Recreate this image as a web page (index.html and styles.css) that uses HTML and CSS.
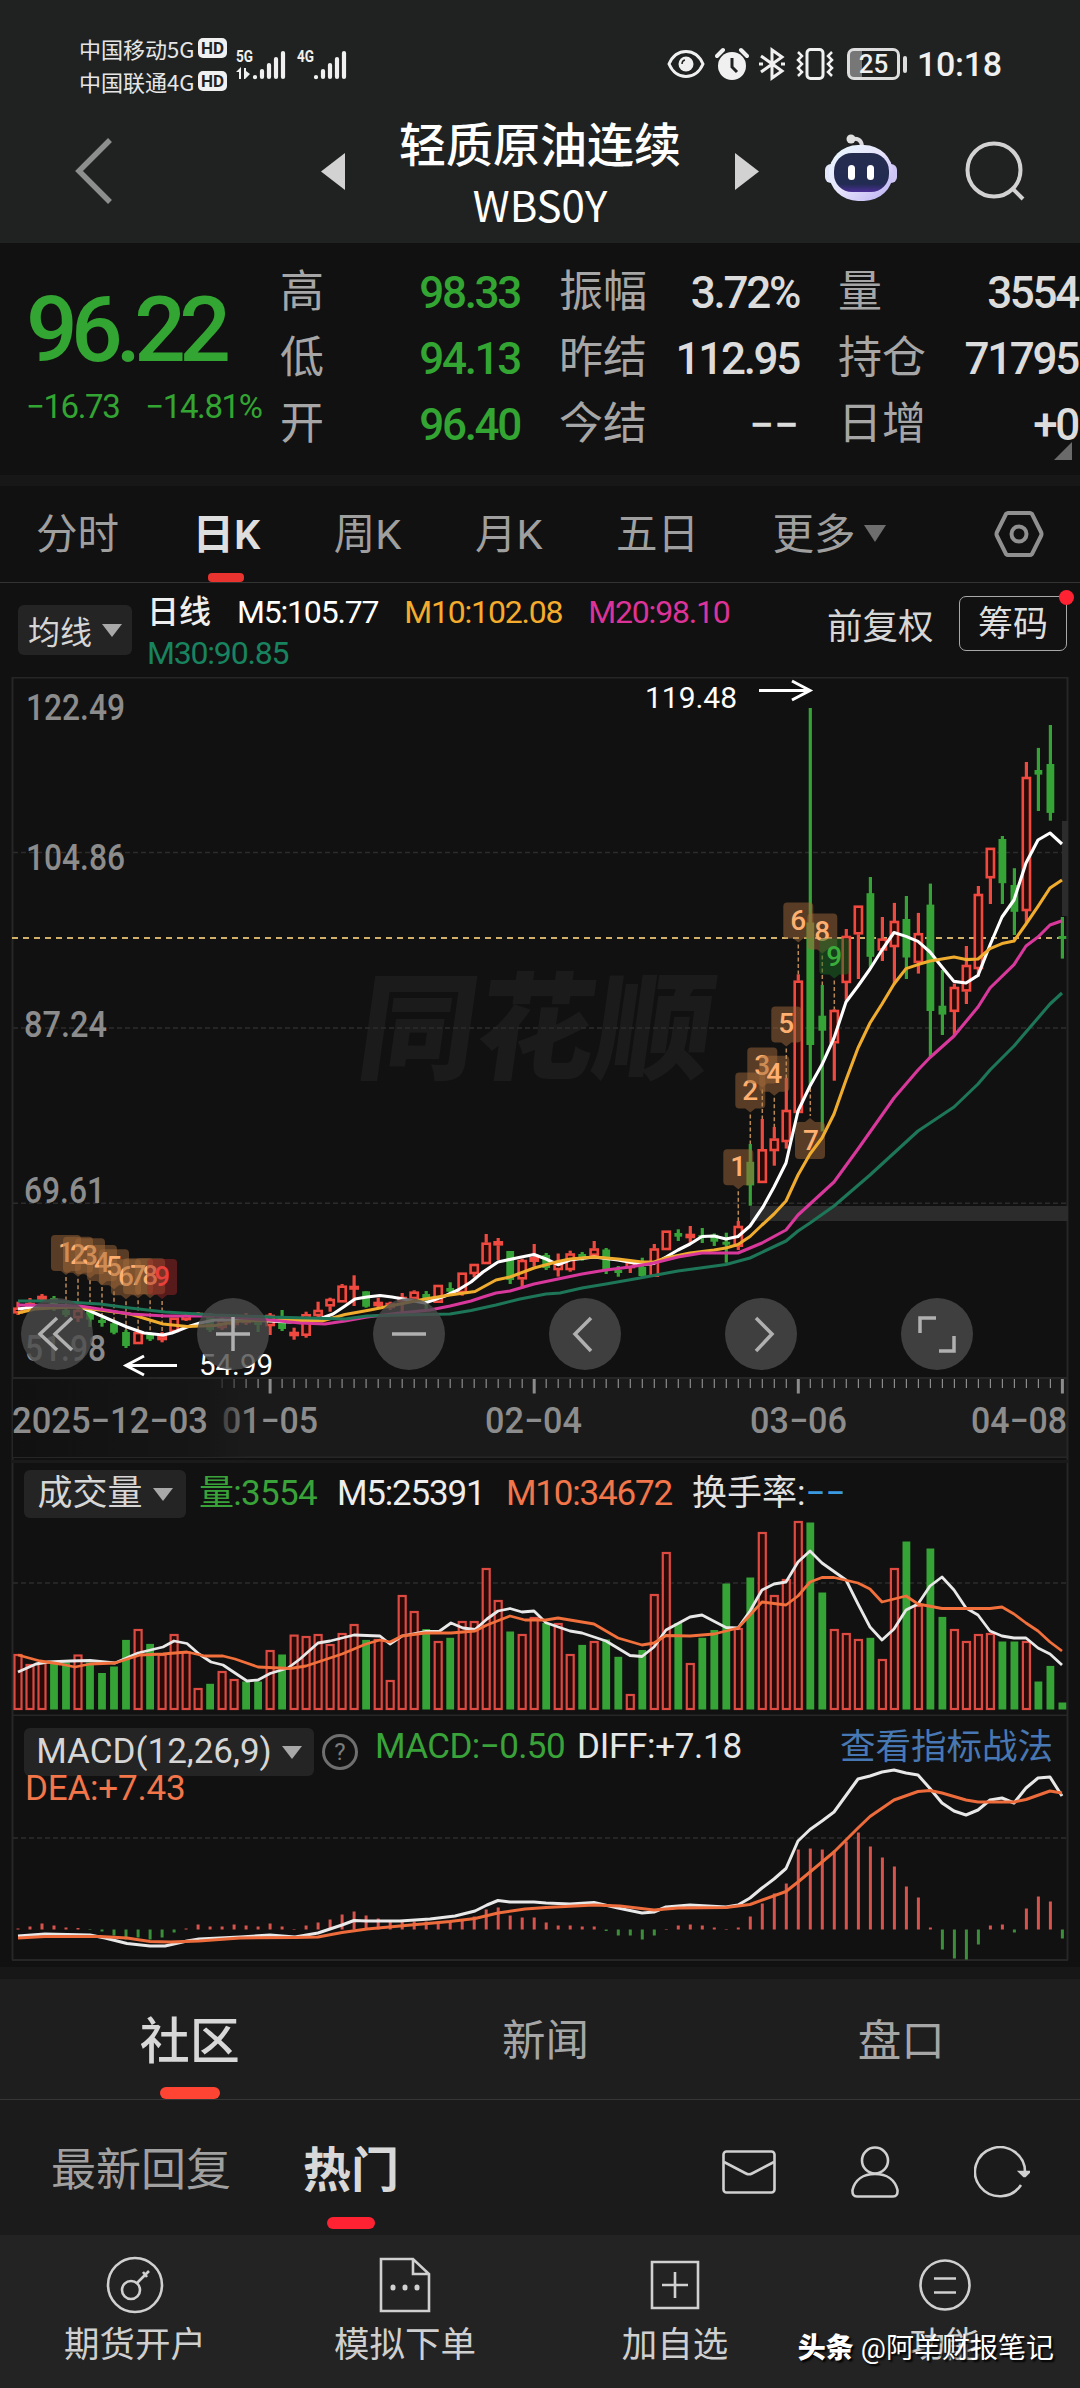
FILE: index.html
```html
<!DOCTYPE html>
<html lang="zh-CN">
<head>
  <meta charset="UTF-8">
  <meta name="viewport" content="width=device-width, initial-scale=1.0">
  <title>轻质原油连续 WBS0Y</title>
  <link rel="stylesheet" href="styles.css">
</head>
<body>
  <div class="top">
    <div class="status">
      <div class="carriers">
        <div class="carrier"><span>中国移动5G</span><b>HD</b></div>
        <div class="carrier"><span>中国联通4G</span><b>HD</b></div>
      </div>
      <svg class="signals" width="114" height="38" viewBox="0 -4 114 38">
        <g fill="#f0f0f0">
          <text x="0" y="14" class="net" textLength="17" lengthAdjust="spacingAndGlyphs">5G</text>
          <text x="61" y="14" class="net" textLength="17" lengthAdjust="spacingAndGlyphs">4G</text>
          <path d="M0 24L5 19V31H3V24ZM8 20H10V23L14 26L9 31H8Z"/>
        </g>
        <path d="M18 29V29.2M25 23V29M32 17V29M39 11V29M46 5V29M79 29V29.2M86 23V29M93 17V29M100 11V29M107 5V29" transform="translate(1 0)" stroke="#f0f0f0" stroke-width="4.2" stroke-linecap="round"/>
      </svg>
      <div class="status-right">
        <svg width="38" height="30" viewBox="0 0 38 30" fill="none" stroke="#f0f0f0" stroke-width="3"><path d="M2 15C6 6 12 2.500 19 2.500S32 6 36 15C32 24 26 27.500 19 27.500S6 24 2 15Z"/><circle cx="19" cy="15" r="7.500" fill="#f0f0f0" stroke="none"/><path d="M15 15Q15 11.500 18 11" stroke="#1f2221" stroke-width="1.500"/></svg>
        <svg class="alarm" width="34" height="34" viewBox="0 0 34 34"><circle cx="17" cy="19" r="14" fill="#f0f0f0"/><path d="M2 9L8 3M32 9L26 3" stroke="#f0f0f0" stroke-width="4" stroke-linecap="round"/><path d="M17 11V20L22 25" fill="none" stroke="#1f2221" stroke-width="3"/></svg>
        <svg class="bt" width="26" height="34" viewBox="0 0 26 34" fill="none" stroke="#f0f0f0" stroke-width="3"><path d="M2 9L23 24L13 31V3L23 10L2 25M0 17H4M22 17H26"/></svg>
        <svg class="vib" width="40" height="34" viewBox="0 0 40 34" fill="none" stroke="#f0f0f0" stroke-width="3"><rect x="12" y="2.500" width="16" height="29" rx="3.500"/><path d="M3 5L7 9L3 13L7 17L3 21L7 25L3 29M37 5L33 9L37 13L33 17L37 21L33 25L37 29" stroke-width="2.500"/></svg>
        <div class="battery"><span>25</span></div>
        <i class="battery-cap"></i>
        <span class="time">10:18</span>
      </div>
    </div>
    <div class="header">
      <svg class="back" width="40" height="66" viewBox="0 0 40 66"><path d="M36 2L5 33L36 64" fill="none" stroke="#8d8f8e" stroke-width="5.500"/></svg>
      <svg class="prev" width="24" height="37" viewBox="0 0 24 37"><path d="M24 0V37L0 18.500Z" fill="#d2d2d2"/></svg>
      <div class="title">
        <h1>轻质原油连续</h1>
        <p>WBS0Y</p>
      </div>
      <svg class="next" width="24" height="37" viewBox="0 0 24 37"><path d="M0 0V37L24 18.500Z" fill="#d2d2d2"/></svg>
      <svg class="robot" width="74" height="68" viewBox="0 0 74 68">
        <defs>
          <linearGradient id="head" x1="0" y1="0" x2="1" y2="1"><stop offset="0" stop-color="#e9fbff"/><stop offset=".5" stop-color="#e6e2fb"/><stop offset="1" stop-color="#b9aef2"/></linearGradient>
          <linearGradient id="face" x1="0" y1="0" x2="0" y2="1"><stop offset="0" stop-color="#252d4f"/><stop offset=".8" stop-color="#222b52"/><stop offset="1" stop-color="#4b2f96"/></linearGradient>
        </defs>
        <path d="M27 5Q37 3 38 12" fill="none" stroke="#dcdce0" stroke-width="4"/>
        <circle cx="27" cy="5" r="4.500" fill="#e0e0e0"/>
        <rect x="1" y="30" width="12" height="19" rx="6" fill="#e2e6fb"/>
        <rect x="61" y="30" width="12" height="19" rx="6" fill="#cfc6f6"/>
        <rect x="5" y="11" width="64" height="56" rx="29" fill="url(#head)"/>
        <rect x="10" y="19" width="55" height="39" rx="18" fill="url(#face)"/>
        <rect x="24" y="31" width="7" height="15" rx="3.500" fill="#fff"/>
        <rect x="43" y="31" width="7" height="15" rx="3.500" fill="#fff"/>
      </svg>
      <svg class="search" width="62" height="62" viewBox="0 0 62 62" fill="none" stroke="#d2d2d2" stroke-width="4"><circle cx="29" cy="29" r="26.500"/><path d="M47 47L58 58"/></svg>
    </div>
  </div>

  <div class="quote">
    <div class="last">
      <div class="price">96.22</div>
      <div class="change"><span>−16.73</span><span>−14.81%</span></div>
    </div>
    <dl class="stats down">
      <dt>高</dt><dd>98.33</dd>
      <dt>低</dt><dd>94.13</dd>
      <dt>开</dt><dd>96.40</dd>
    </dl>
    <dl class="stats">
      <dt>振幅</dt><dd>3.72%</dd>
      <dt>昨结</dt><dd>112.95</dd>
      <dt>今结</dt><dd class="dash">−−</dd>
    </dl>
    <dl class="stats">
      <dt>量</dt><dd>3554</dd>
      <dt>持仓</dt><dd>71795</dd>
      <dt>日增</dt><dd>+0</dd>
    </dl>
    <i class="corner"></i>
  </div>

  <div class="tabs">
    <span>分时</span>
    <span class="on">日K</span>
    <span>周K</span>
    <span>月K</span>
    <span>五日</span>
    <span>更多<i class="tri"></i></span>
    <svg width="50" height="48" viewBox="0 0 50 48" fill="none" stroke="#909090" stroke-width="4"><path d="M14 3H36Q37 3 38 4L47 22Q48 24 47 26L38 44Q37 45 36 45H14Q13 45 12 44L3 26Q2 24 3 22L12 4Q13 3 14 3Z"/><circle cx="25" cy="24" r="7.500"/></svg>
  </div>

  <div class="ma">
    <span class="pick">均线<i class="tri"></i></span>
    <div class="ma-values">
      <span class="c-name">日线</span>
      <span class="c5">M5:105.77</span>
      <span class="c10">M10:102.08</span>
      <span class="c20">M20:98.10</span>
      <span class="c30">M30:90.85</span>
    </div>
    <span class="adjust">前复权</span>
    <span class="chips">筹码<i class="dot"></i></span>
  </div>

  <div class="panel kline">
    <svg id="kline" width="1080" height="781" viewBox="0 677 1080 781"></svg>
    <div class="tools">
      <span><svg width="72" height="72"><path d="M36 20L19 36L36 52M51 20L34 36L51 52"/></svg></span>
      <span><svg width="72" height="72"><path d="M19 36H53M36 19V53"/></svg></span>
      <span><svg width="72" height="72"><path d="M19 36H53"/></svg></span>
      <span><svg width="72" height="72"><path d="M42 20L26 36L42 53"/></svg></span>
      <span><svg width="72" height="72"><path d="M31 20L47 36L31 53"/></svg></span>
      <span><svg width="72" height="72"><path d="M19 35V20H35M38 53H53V38"/></svg></span>
    </div>
  </div>

  <div class="panel volume">
    <svg id="volume" width="1080" height="258" viewBox="0 1458 1080 258"></svg>
    <div class="legend">
      <span class="pick">成交量<i class="tri"></i></span>
      <span class="v1">量:3554</span>
      <span class="v2">M5:25391</span>
      <span class="v3">M10:34672</span>
      <span class="v4">换手率:<em>−−</em></span>
    </div>
  </div>

  <div class="panel macd">
    <svg id="macd" width="1080" height="251" viewBox="0 1716 1080 251"></svg>
    <div class="legend">
      <span class="pick">MACD(12,26,9)<i class="tri"></i></span>
      <span class="help">?</span>
      <span class="m1">MACD:−0.50</span>
      <span class="m2">DIFF:+7.18</span>
      <span class="link">查看指标战法</span>
      <span class="m3">DEA:+7.43</span>
    </div>
  </div>

  <div class="main-tabs">
    <span class="on">社区</span>
    <span>新闻</span>
    <span>盘口</span>
  </div>

  <div class="sub-tabs">
    <span>最新回复</span>
    <span class="on">热门</span>
    <svg class="mail" width="54" height="44" viewBox="0 0 54 44"><rect x="1.500" y="1.500" width="51" height="41" rx="3"/><path d="M2 12L24 23.500Q27 25 30 23.500L52 12"/></svg>
    <svg class="user" width="48" height="52" viewBox="0 0 48 52"><circle cx="24" cy="14.500" r="13"/><path d="M24 28C12 28 4 34 1.500 44Q1 50.500 6 50.500H42Q47 50.500 46.500 44C44 34 36 28 24 28Z"/></svg>
    <svg class="reload" width="56" height="52" viewBox="0 0 56 52"><path d="M51 26A25 24.500 0 1 0 47 39"/><path d="M46 26H55L51 30H50Z" fill="#d0d0d0"/></svg>
  </div>

  <div class="bottom">
    <div class="item">
      <svg width="60" height="60" viewBox="0 0 60 60"><circle cx="30" cy="30" r="27"/><circle cx="26" cy="35" r="9"/><path d="M32 28L44 16M38 17L42 22"/></svg>
      <span>期货开户</span>
    </div>
    <div class="item">
      <svg width="60" height="60" viewBox="0 0 60 60"><path d="M6 4H38L54 19V56H6ZM38 4V19H54"/><path d="M18 32V33M30 32V33M42 32V33" stroke-width="5" stroke-linecap="round"/></svg>
      <span>模拟下单</span>
    </div>
    <div class="item">
      <svg width="60" height="60" viewBox="0 0 60 60"><path d="M7 7H53V53H7ZM17 30H43M30 17V43"/></svg>
      <span>加自选</span>
    </div>
    <div class="item">
      <svg width="60" height="60" viewBox="0 0 60 60"><circle cx="30" cy="30" r="24.500"/><path d="M19 23.500H41M19 37.500H41"/></svg>
      <span>功能</span>
    </div>
    <div class="sign"><b>头条</b><span>@阿羊财报笔记</span></div>
  </div>

  <script src="chart.js"></script>
</body>
</html>
```
FILE: styles.css
```css
*{
  margin: 0;
  padding: 0;
  box-sizing: border-box;
}
body{
  width: 1080px;
  height: 2388px;
  overflow: hidden;
  background: #111;
  color: #d6d6d6;
  font-family: Roboto, "Noto Sans CJK SC", sans-serif;
}
svg{
  display: block;
  flex: none;
}
i, em{
  font-style: normal;
}
.tri{
  display: inline-block;
  border: 10px solid transparent;
  border-top: 13px solid #a8a8a8;
  border-bottom: 0;
}

/* 顶部 */
.top{
  height: 243px;
  background: #1f2221;
}
.status{
  display: flex;
  height: 113px;
  padding: 31px 0 0 79px;
}
.carriers{
  width: 157px;
}
.carrier{
  display: flex;
  align-items: center;
  height: 33px;
  font: 22px "Noto Sans CJK SC", sans-serif;
  color: #e6e6e6;
}
.carrier span{
  width: 119px;
  white-space: nowrap;
}
.carrier b{
  width: 29px;
  height: 20px;
  border-radius: 5px;
  background: #f0f0f0;
  color: #1f2221;
  font: bold 17px/20px Roboto, sans-serif;
  text-align: center;
}
.signals{
  margin-top: 13px;
}
.net{
  font: bold 17px Roboto, sans-serif;
}
.status-right{
  display: flex;
  align-items: center;
  height: 34px;
  margin: 16px 0 0 317px;
}
.alarm{
  margin-left: 10px;
}
.bt{
  margin-left: 10px;
}
.vib{
  margin-left: 10px;
}
.battery{
  width: 53px;
  height: 32px;
  margin-left: 12px;
  border: 3px solid #ddd;
  border-radius: 7px;
  background: linear-gradient(90deg, #777 12px, transparent 12px);
  color: #f0f0f0;
  font: 500 26px/27px Roboto, sans-serif;
  text-align: center;
}
.battery-cap{
  width: 4px;
  height: 17px;
  margin-left: 3px;
  border-radius: 2px;
  background: #ddd;
}
.time{
  margin-left: 10px;
  font-size: 34px;
  font-weight: 500;
  letter-spacing: -0.3px;
  color: #f0f0f0;
}
.header{
  display: flex;
  align-items: flex-start;
  height: 130px;
  padding-left: 74px;
}
.back{
  margin-top: 25px;
}
.prev{
  margin: 40px 0 0 207px;
}
.title{
  width: 390px;
  margin-top: -3px;
  text-align: center;
  color: #fff;
  font-family: "Noto Sans CJK SC", sans-serif;
}
.title h1{
  font-size: 47px;
  line-height: 64px;
  font-weight: 500;
}
.title p{
  margin-top: 2px;
  font-size: 42px;
  line-height: 56px;
}
.next{
  margin-top: 40px;
}
.robot{
  margin: 21px 0 0 65px;
}
.search{
  margin: 28px 0 0 67px;
}

/* 报价 */
.quote{
  position: relative;
  display: flex;
  height: 243px;
  padding: 16px 0 0 26px;
  border-bottom: 11px solid #171717;
}
.last{
  flex: none;
  width: 254px;
  color: #33a532;
}
.price{
  margin-top: 21px;
  font-size: 91px;
  line-height: 100px;
  font-weight: 500;
  letter-spacing: -6.8px;
}
.change{
  display: flex;
  gap: 26px;
  margin-top: 7px;
  font-size: 33px;
  line-height: 40px;
  letter-spacing: -1.4px;
  white-space: nowrap;
}
.stats{
  display: grid;
  flex: none;
  grid-template-columns: 90px 150px;
  grid-auto-rows: 66px;
  margin-right: 39px;
  line-height: 66px;
}
.stats dt{
  font-size: 44px;
  color: #a6a6a6;
  white-space: nowrap;
}
.stats dd{
  padding-top: 1px;
  font-size: 44px;
  font-weight: 500;
  letter-spacing: -2.3px;
  text-align: right;
  color: #dcdcdc;
}
.stats.down dd{
  color: #33a532;
}
.stats .dash{
  letter-spacing: 0;
}
.corner{
  position: absolute;
  right: 8px;
  top: 199px;
  border: 9px solid #6a6a6a;
  border-left-color: transparent;
  border-top-color: transparent;
}

/* 周期 */
.tabs{
  display: flex;
  align-items: center;
  height: 97px;
  padding-left: 36px;
  border-bottom: 1px solid #333;
  font-size: 41.5px;
  color: #9f9f9f;
}
.tabs span{
  position: relative;
  height: 96px;
  margin-right: 73.5px;
  line-height: 98px;
  white-space: nowrap;
}
.tabs span:nth-child(6){
  margin-right: 108px;
}
.tabs .on{
  color: #dedede;
  font-weight: 600;
}
.tabs .on::after{
  content: "";
  position: absolute;
  left: 15px;
  bottom: 0;
  width: 36px;
  height: 9px;
  border-radius: 4px;
  background: #e8332f;
}
.tabs .tri{
  margin: 0 0 7px 9px;
  border-width: 17px 11px 0;
  border-top-color: #6e6e6e;
}

/* 均线 */
.ma{
  display: flex;
  height: 94px;
  padding-left: 18px;
}
.pick{
  display: flex;
  align-items: center;
  justify-content: center;
  gap: 10px;
  border-radius: 6px;
  background: #242424;
  color: #d6d6d6;
  white-space: nowrap;
}
.ma .pick{
  width: 114px;
  height: 50px;
  margin-top: 22px;
  font-size: 32px;
}
.ma-values{
  display: flex;
  flex: none;
  flex-wrap: wrap;
  column-gap: 26px;
  width: 675px;
  padding: 9px 0 0 15px;
  font-size: 32px;
  line-height: 41px;
  letter-spacing: -1.2px;
  align-content: flex-start;
}
.c-name{
  letter-spacing: 0;
  font-weight: 500;
  color: #eee;
}
.c5{
  color: #fff;
}
.c10{
  color: #f5ac2c;
}
.c20{
  color: #dd3399;
}
.c30{
  width: 100%;
  color: #18835f;
}
.adjust{
  flex: none;
  margin: 18px 0 0 20px;
  width: 132px;
  font-size: 35.5px;
  line-height: 52px;
  white-space: nowrap;
}
.chips{
  position: relative;
  flex: none;
  width: 108px;
  height: 55px;
  margin-top: 13px;
  border: 1.5px solid #a8a8a8;
  border-radius: 7px;
  font-size: 35px;
  line-height: 55px;
  text-align: center;
  color: #dedede;
}
.dot{
  position: absolute;
  top: -7px;
  right: -8px;
  width: 15px;
  height: 15px;
  border-radius: 50%;
  background: #ff2233;
}

/* 图表 */
.panel{
  display: grid;
}
.panel > *{
  grid-area: 1 / 1;
}
.tools{
  display: flex;
  align-self: end;
  gap: 104px;
  margin: 0 0 88px 21px;
}
.tools span{
  width: 72px;
  height: 72px;
  border-radius: 50%;
  background: rgba(75, 75, 75, 0.8);
}
.tools path{
  fill: none;
  stroke: #b0b0b0;
  stroke-width: 3.5;
}
.axis{
  font: 500 36px Roboto, sans-serif;
  fill: #8c8c8c;
}
.mark{
  font: 30px Roboto, sans-serif;
  fill: #fff;
}
.badge{
  font: 500 28px Roboto, sans-serif;
  text-anchor: middle;
}
.brand{
  font: 900 116px "Noto Sans CJK SC", sans-serif;
  fill: #1b1b1b;
}
.legend{
  display: flex;
  flex-wrap: wrap;
  align-items: center;
  align-content: flex-start;
  padding: 11px 0 0 24px;
  font-size: 35px;
  line-height: 50px;
  white-space: nowrap;
}
.legend .pick{
  height: 48px;
}
.volume .pick{
  width: 162px;
}
.v1{
  width: 138px;
  margin-left: 13px;
  color: #39a339;
  letter-spacing: -0.7px;
}
.v2{
  width: 169px;
  color: #eee;
  letter-spacing: -1.2px;
}
.v3{
  width: 186px;
  color: #f2764a;
  letter-spacing: -1.2px;
}
.v4{
  color: #e2e2e2;
}
.v4 em{
  color: #3a9ae0;
}
.macd .pick{
  width: 290px;
  letter-spacing: 0;
}
.help{
  width: 36px;
  height: 36px;
  margin: 0 17px 0 8px;
  border: 3px solid #6f6f6f;
  border-radius: 50%;
  font-size: 24px;
  line-height: 31px;
  text-align: center;
  color: #7c7c7c;
}
.macd .m1,
.macd .m2,
.macd .link{
  margin-bottom: 10px;
  line-height: 40px;
}
.m1{
  width: 202px;
  color: #39a339;
  letter-spacing: -0.6px;
}
.m2{
  width: 263px;
  color: #e6e6e6;
  letter-spacing: -0.3px;
}
.link{
  font-size: 35.5px;
  color: #4878b4;
}
.m3{
  margin: -8px 0 0 1px;
  line-height: 40px;
  color: #f2764a;
  letter-spacing: -0.2px;
}

/* 社区 */
.main-tabs{
  display: flex;
  height: 133px;
  padding: 0 1px 0 12px;
  border-top: 12px solid #171717;
  border-bottom: 1px solid #363636;
  background: #1e1e1e;
  font-size: 43.5px;
  line-height: 126px;
  text-align: center;
  color: #a6a6a6;
}
.main-tabs span{
  position: relative;
  flex: 1;
}
.main-tabs .on{
  font-size: 50px;
  font-weight: 500;
  color: #d8d8d8;
}
.on::after{
  content: "";
}
.main-tabs .on::after{
  position: absolute;
  left: 148px;
  bottom: 0;
  width: 60px;
  height: 12px;
  border-radius: 6px;
  background: #ff4433;
}
.sub-tabs{
  display: flex;
  height: 135px;
  padding-left: 51px;
  background: #1b1b1b;
  font-size: 45px;
  line-height: 142px;
  color: #a0a0a0;
}
.sub-tabs span{
  position: relative;
}
.sub-tabs .on{
  margin-left: 72px;
  font-size: 48px;
  font-weight: bold;
  color: #d8d8d8;
}
.sub-tabs .on::after{
  position: absolute;
  left: 24px;
  bottom: 6px;
  width: 48px;
  height: 12px;
  border-radius: 6px;
  background: #ff2233;
}
.sub-tabs svg,
.bottom svg{
  fill: none;
  stroke: #d0d0d0;
  stroke-width: 2.6;
}
.mail{
  margin: 50px 0 0 323px;
}
.user{
  margin: 46px 0 0 75px;
}
.reload{
  margin: 46px 0 0 75px;
}
.bottom{
  position: relative;
  display: flex;
  height: 153px;
  background: #232323;
}
.item{
  display: flex;
  flex-direction: column;
  align-items: center;
  width: 270px;
  padding-top: 20px;
  font-size: 35.5px;
  line-height: 60px;
  color: #cfcfcf;
}
.sign{
  position: absolute;
  right: 26px;
  top: 94px;
  display: flex;
  gap: 7px;
  font-size: 28px;
  line-height: 40px;
  color: #fff;
  text-shadow: 2px 2px 2px #000;
}
.sign b{
  font-weight: 900;
}
```
FILE: chart.js
```js
var STEP = 12.005, X0 = 18;
var RED = '#f04a40', GREEN = '#36a336';

function px(i) {
  return +(X0 + i * STEP).toFixed(1);
}
function line(x1, y1, x2, y2, color, w, extra) {
  return '<line x1="' + x1 + '" y1="' + y1 + '" x2="' + x2 + '" y2="' + y2 +
    '" stroke="' + color + '" stroke-width="' + w + '" ' + (extra || '') + '/>';
}
function rect(x, y, w, h, attrs) {
  return '<rect x="' + x + '" y="' + y + '" width="' + w + '" height="' + h + '" ' + attrs + '/>';
}
function poly(points, color, w) {
  return '<polyline points="' + points + '" fill="none" stroke="' + color +
    '" stroke-width="' + w + '" stroke-linejoin="round"/>';
}
function label(str, x, y, w, cls) {
  return '<text class="' + cls + '" x="' + x + '" y="' + y + '" textLength="' + w +
    '" lengthAdjust="spacingAndGlyphs">' + str + '</text>';
}

// 每根K线: 颜色, 最高, 实体上沿, 实体下沿, 最低
var candles = [
  ['r',1301.7,1307.7,1313.3,1315],['r',1298,1303,1309,1311],['r',1294,1296,1299.3,1301],['g',1296,1298,1309,1311],
  ['g',1307,1310,1315,1317],['r',1307,1310,1318,1322],['g',1308,1311.3,1319.7,1327],['g',1317.7,1320,1322.7,1326.7],
  ['g',1320.7,1323.3,1332.7,1334.3],['g',1330,1332,1346,1348],['r',1331,1332,1344,1344],['g',1332,1335,1339.3,1341],
  ['r',1332,1335.3,1340,1342.3],['r',1317.7,1317.7,1332,1332],['r',1314,1315,1320,1321],['r',1312,1313,1316,1317],
  ['g',1313,1315,1330,1332],['r',1317,1320,1328,1330],['r',1315,1318,1325,1328],['r',1313,1317,1323,1325],
  ['g',1317,1318,1325,1332],['r',1313,1315,1326,1335],['g',1310,1317,1329,1331],['r',1327.7,1332,1336,1339.7],
  ['r',1311.7,1314.3,1335.7,1337.7],['r',1301.7,1310,1316,1318],['r',1297.7,1299,1306.3,1311.7],['r',1284,1285.7,1302.3,1302.3],
  ['r',1275.3,1286,1288.3,1306],['g',1291.3,1291.3,1306.7,1307.7],['r',1297.7,1302,1306,1308],['r',1301.7,1303,1308,1310],
  ['r',1293,1297,1302,1312],['r',1290.3,1291.7,1299,1299],['g',1291,1294,1298,1310],['r',1285,1285,1302.7,1302.7],
  ['g',1282.3,1288,1291.7,1293],['r',1272.7,1272.7,1293,1295.7],['r',1264,1264,1274,1277.3],['r',1234,1242.7,1264,1264],
  ['r',1238,1241.3,1245.3,1260],['g',1251,1251,1280,1284],['r',1258.7,1260,1279.3,1288.3],['r',1244,1257.3,1261.7,1266.7],
  ['g',1253,1255,1268,1270],['r',1253.5,1263,1270,1276.6],['r',1250.7,1253.5,1270,1271.7],['g',1252,1254,1258,1260.7],
  ['r',1241,1248.5,1255.7,1256.7],['g',1248,1249.5,1270,1274],['g',1266,1270,1271,1276.7],['r',1260,1262,1268,1273],
  ['g',1257.7,1266.7,1276,1278],['r',1244,1248.5,1276.7,1276.7],['r',1230.7,1230.7,1250,1250],['g',1229.3,1233,1236.7,1241],
  ['r',1226,1234,1238,1243],['g',1228,1235,1238,1243],['g',1233.5,1234.7,1241.7,1246],['g',1232.7,1241.7,1244.4,1262.7],
  ['r',1221,1226,1246.7,1250],['g',1144,1161.8,1185.4,1205.7],['r',1119,1149.3,1182.9,1182.9],['r',1127,1138.6,1151,1165.7],
  ['r',1078,1110,1142,1148.6],['r',974.3,980.7,1112.9,1112.9],['g',707.9,922.5,1045,1086],['g',985,1015.7,1030.7,1131.4],
  ['r',1009.3,1010,1043.2,1080.7],['r',929,936,982.9,1000.4],['r',905.7,905.7,934.3,979],['g',877,893.2,956.8,968],
  ['r',917,938.6,950.4,961],['r',902.9,921,947,984.3],['g',896,919,957.5,979],['r',912.9,933.2,962.9,973.6],
  ['g',883.6,904.6,1011,1057.5],['g',970,1005.7,1014.6,1035],['r',983.6,987,1011.8,1035],['r',946,965,991.4,1004],
  ['r',886,894,969,976.4],['r',847.9,847.9,878.2,904],['g',836,839,883.2,904],['g',868.2,885,911.8,935],
  ['r',762,777,911,922.5],['g',747.9,770,774.6,811],['g',725,764,812.9,820.7],['g',917,936,938,958.6]
];

var ma30 = '18,1301 50,1301 100,1304 130,1308 165,1312 215,1315 270,1317 345,1319 367,1316 400,1315 450,1314 471,1310.5 496,1305 520,1299 546,1294 560,1293 582,1288 606,1284 640,1278 678,1271 726,1264.5 750,1258 786,1241 798,1231 810,1223 834,1206 870,1175 918,1131 954,1107 978,1084 990,1070 1014,1046 1038,1018 1050,1004 1062,993';
var ma20 = '18,1305 80,1306 130,1314 165,1316 215,1316 270,1320 300,1323 325,1324 345,1321 367,1317 400,1313 430,1310 450,1306 471,1301 483,1297 496,1293 510,1291 534,1284 558,1279 582,1274 606,1270 630,1267 654,1263 678,1257 702,1253 738,1253 750,1248 762,1243 786,1230 798,1215 834,1182 858,1149 894,1098 918,1070 930,1057.5 954,1036 978,1007 990,988 1014,964.6 1026,946 1038,937 1050,925 1062,920.7';
var ma10 = '18,1313 35,1309 52,1308 75,1307 100,1310 130,1314 163,1324 187,1326.5 215,1325.5 240,1321 280,1320 322,1321 345,1314.5 370,1310 400,1304 425,1299 450,1295 475,1291.5 485,1286 496,1280 510,1277 534,1268 558,1261.5 570,1259 594,1257 618,1259 642,1262 654,1262 666,1258 690,1253 714,1250 726,1248 738,1244.5 750,1236.5 762,1225 774,1214 786,1201 798,1175 810,1154 822,1138 834,1114 846,1080 858,1048 870,1023 882,1004 894,984 906,968.6 918,964.6 930,961 954,957 966,959.6 978,959 990,948.6 1002,943.6 1014,941 1026,924 1038,906.4 1050,888 1062,880';
var ma5 = '18,1309 34,1307 52,1305 80,1307 90,1311 113,1321 127,1327 144,1333 163,1335 172,1333 187,1327 200,1323 215,1320 250,1320 290,1322 322,1318 333,1314 345,1306 355,1299 367,1297 380,1295.5 392,1297 403,1299 425,1303 445,1296 458,1290 471,1282 483,1272 498,1262 519,1257.5 534,1254.5 546,1259 558,1264.7 570,1260 594,1257 618,1260 642,1264.5 654,1263.5 666,1257 678,1250 690,1244 702,1236.5 714,1236 726,1239 738,1236.5 750,1226 763,1207 774,1187 786,1163 791,1141 798,1111 810,1086 822,1064.6 834,1038 846,1002 858,986 870,969 882,950 894,932.5 906,936.4 918,941.4 930,952 942,967 954,981.4 966,983 978,975.4 990,945 1002,917 1014,900 1026,863 1038,840 1050,833 1062,844';

// 神奇九转: 序号, K线下标, 标签顶部
var nines = [
  [1,4,1235],[2,5,1236.7],[3,6,1238.3],[4,7,1245],[5,8,1249.3],[6,9,1259.3],[7,10,1258.3],[8,11,1258.3],[9,12,1259,'red'],
  [1,60,1149.3],[2,61,1072.5],[3,62,1047.5],[4,63,1055.7],[5,64,1006.4],[6,65,902.5],[8,67,913.6],[9,68,938.6,'green']
];

function drawKline() {
  var s = '<defs><linearGradient id="fade"><stop offset="0" stop-color="#111"/><stop offset=".8" stop-color="#161616"/>' +
    '<stop offset="1" stop-color="#1a1a1a" stop-opacity="0"/></linearGradient></defs>';
  s += rect(12, 1378, 1056, 80, 'fill="#1a1a1a"');
  s += '<g transform="translate(354 1070) skewX(-8)">' + label('同花顺', 0, 0, 354, 'brand') + '</g>';
  [852.6, 1028, 1203.3].forEach(function (y) {
    s += line(13, y, 1066, y, '#2c2c2c', 1.5, 'stroke-dasharray="5 3"');
  });
  s += rect(12.5, 677.5, 1055, 780, 'fill="none" stroke="#262626" stroke-width="2"');
  s += line(12, 1378, 1068, 1378, '#262626', 2);
  s += label('122.49', 26, 720, 99, 'axis') + label('104.86', 26, 870, 99, 'axis') +
    label('87.24', 24, 1037, 83, 'axis') + label('69.61', 24, 1203, 81, 'axis') + label('51.98', 25, 1361, 81, 'axis');
  s += rect(750, 1206, 318, 15, 'fill="#2c2c2c"') + rect(1062, 821, 6, 95, 'fill="#2c2c2c"');
  s += line(12, 938, 1067, 938, '#d3b067', 1.8, 'stroke-dasharray="6 5"');

  candles.forEach(function (c, i) {
    var x = px(i), color = c[0] === 'r' ? RED : GREEN;
    if (c[0] === 'g') {
      s += line(x, c[1], x, c[4], color, 3.2);
      s += rect(x - 3.9, c[2], 7.8, Math.max(c[3] - c[2], 3), 'fill="' + color + '"');
    } else {
      s += line(x, c[1], x, c[2], color, 3.2) + line(x, c[3], x, c[4], color, 3.2);
      s += rect(x - 3.6, c[2] + 1, 7.2, Math.max(c[3] - c[2] - 2, 1.5), 'fill="#2a0907" stroke="' + color + '" stroke-width="2.6"');
    }
  });

  nines.forEach(function (n) {
    var x = px(n[1]), top = n[2];
    var bg = n[3] === 'red' ? '#a02525' : n[3] === 'green' ? '#1c6b25' : '#a0683a';
    var fg = n[3] === 'red' ? '#e8403a' : n[3] === 'green' ? '#3aac3a' : '#ffb070';
    s += '<path d="M' + (x - 11) + ' ' + top + 'h22q4 0 4 4v28q0 4 -4 4h-6l-5 4l-5 -4h-6q-4 0 -4 -4v-28q0 -4 4 -4z" fill="' + bg + '" fill-opacity=".5"/>';
    s += line(x, top + 42, x, candles[n[1]][1], '#b98a55', 1.5, 'stroke-dasharray="4 2.5"');
    s += '<text class="badge" x="' + x + '" y="' + (top + 27) + '" fill="' + fg + '">' + n[0] + '</text>';
  });
  // 7 在K线下方
  s += '<path d="M799 1122h6l5 -4l5 4h6q4 0 4 4v29q0 4 -4 4h-22q-4 0 -4 -4v-29q0 -4 4 -4z" fill="#a0683a" fill-opacity=".5"/>';
  s += line(810.3, 1088, 810.3, 1116, '#b98a55', 1.5, 'stroke-dasharray="4 2.5"');
  s += '<text class="badge" x="811" y="1150" fill="#ffb070">7</text>';

  s += poly(ma5, '#fff', 3.1) + poly(ma10, '#f0ac2e', 3.1) + poly(ma20, '#d8389c', 3.1) + poly(ma30, '#1d7658', 3.1);

  s += label('119.48', 645, 708, 92, 'mark');
  s += '<path d="M759 690.5H809M792 681L810 690.5L792 700" fill="none" stroke="#fff" stroke-width="3"/>';
  s += label('54.99', 199, 1375, 74, 'mark');
  s += '<path d="M177 1365.5H127M144 1356L126 1365.5L144 1375" fill="none" stroke="#fff" stroke-width="3"/>';

  for (var i = 17; i < 88; i++) {
    var big = (i - 21) % 22 === 0;
    s += line(px(i), 1379, px(i), big ? 1393.5 : 1388, '#8c8c8c', big ? 3 : 1.2);
  }
  s += label('01−05', 222, 1433, 96, 'axis') + label('02−04', 485, 1433, 97, 'axis') +
    label('03−06', 750, 1433, 97, 'axis') + label('04−08', 971, 1433, 96, 'axis');
  s += rect(13, 1379, 242, 78, 'fill="url(#fade)"');
  s += label('2025−12−03', 12, 1433, 196, 'axis');
  document.getElementById('kline').innerHTML = s;
}

// 成交量柱, 正为阳线, 负为阴线
var volumes = [
  55,45,47,-47,-47,54.5,-47,-36.5,-43,-69.6,80,-65.6,55,75,57.5,21,-25.7,38,30,-28,-28,59,-55,74.4,73,75,65,76,85,-69.6,
  70,29,114,98,-80.5,68,-71.7,88,88,141,109,-78,75,92,-86.5,86,55,-64.6,68,-70,-52.7,15,-59.5,115,157,-86.5,46,-71.7,
  -79.5,-126,81,-132,177,114,130,188,-187,-117,80,76,70,-71.7,50,141,-168,104,-161,-92.6,80,68,75,76,-68,-68,68,-28,-43.6,-7
];
var vma5 = '18,1672 36,1664 48,1662 70,1661 90,1660.5 115,1663 138,1653 163,1647 174,1641 187,1643.5 199,1654 211,1662 223,1665 247,1681 258,1680 270,1673.5 288,1668 300,1659 318,1643 330,1641 354,1635 380,1636 390,1644 402,1636 425,1631.5 439,1631.5 451,1623 463,1628 475,1629.5 487,1619 498,1611 510,1608.5 522,1612 534,1611 546,1622.7 570,1631 582,1633 606,1641 630,1655.5 642,1656.5 654,1647 666,1630 690,1617 702,1615 726,1627.5 738,1628 750,1611 762,1590 774,1584 786,1582 798,1562 810,1551 822,1563 846,1580 858,1604 870,1627 882,1640 894,1629 906,1610 918,1604 930,1586 942,1577 954,1590 966,1608 978,1615 990,1631 1002,1636 1014,1638 1026,1638 1038,1648 1050,1654 1062,1665';
var vma10 = '18,1655 40,1661 60,1664 75,1667 90,1664 115,1663 140,1655 163,1654 187,1652 205,1656 223,1656 235,1659 258,1667 290,1668.5 306,1666 318,1662 342,1654 366,1644 380,1640 390,1642 402,1636 425,1633 451,1633 475,1631 487,1625 510,1616 525,1620 546,1620 558,1618 594,1624 618,1638 642,1645 654,1643 666,1635.5 690,1636 714,1634 738,1628 762,1602 786,1605 798,1596 810,1582 822,1577.5 834,1577.5 858,1583 870,1589 882,1602 906,1596 918,1604 942,1608.5 990,1608.5 1002,1607 1014,1614 1026,1623 1038,1631 1050,1642 1062,1651';

function drawVolume() {
  var s = line(12.5, 1458, 12.5, 1716, '#262626', 2) + line(1067.5, 1458, 1067.5, 1716, '#262626', 2) +
    line(12, 1461.5, 1068, 1461.5, '#1a1a1a', 3) +
    line(12, 1715.5, 1068, 1715.5, '#262626', 2) +
    line(13, 1583, 1066, 1583, '#2c2c2c', 1.5, 'stroke-dasharray="5 3"');
  volumes.forEach(function (v, i) {
    var h = Math.abs(v), x = px(i);
    s += v < 0 ? rect(x - 3.9, 1709.5 - h, 7.8, h, 'fill="' + GREEN + '"')
      : rect(x - 3.5, 1710 - h, 7, h - 1, 'fill="#2a0907" stroke="#dc4a41" stroke-width="2.2"');
  });
  s += poly(vma5, '#e8e8e8', 2.8) + poly(vma10, '#f2703c', 2.8);
  document.getElementById('volume').innerHTML = s;
}

var bars = [
  1,3,6,4,2,1.5,-0.5,-2,-6,-10,-8,-10,-8,-3,1,5,3,3,5,4,3,6,3,0.5,4,7,10,15,18,14,11,9,8,8,8,8,9,10,13,20,22,14,12,12,
  7,4,4,3,3,-1.5,-6,-6,-10,-6,0.5,4,5,4,2,0.5,2,13,26,36,46,80,81,80,79,88,97,83,72,63,43,32,2,-20,-29,-30,-15,4,5,-3,21,33,28,-9
];
var diff = '18,1936 45,1934 90,1935 105,1938 127,1943.5 150,1946 165,1946 187,1941 199,1939 240,1937 270,1935 295,1937 318,1933 330,1929 342,1925 354,1920.5 367,1921 400,1921 430,1919 455,1916 475,1911 487,1905 498,1900.5 510,1902 534,1902 546,1903 570,1904 594,1902.5 618,1908 642,1913 654,1912 666,1907 690,1905 726,1907 738,1905 750,1898 762,1888 774,1879 786,1868.5 798,1841 810,1829.5 822,1821 834,1812 846,1795.5 858,1779 870,1776 882,1772 894,1770 906,1773 918,1775 930,1788.5 942,1803 954,1811 966,1815 978,1810 990,1800 1002,1798 1014,1803 1026,1788 1038,1778 1050,1777 1062,1796';
var dea = '18,1938 45,1936.5 100,1936.5 127,1938 150,1941.5 170,1942 199,1941 240,1938 295,1937.5 318,1937 342,1932.5 367,1929 400,1926 450,1921.5 475,1918.5 498,1913 525,1909 546,1907.5 594,1905 620,1906 654,1910 678,1908 726,1907.5 750,1904.5 786,1891.5 798,1882 810,1872 834,1852 846,1840 858,1828 870,1816.5 894,1800 918,1791.5 930,1790.5 942,1793 966,1800 978,1802 1014,1802 1026,1799.5 1050,1791 1062,1793';

function drawMacd() {
  var s = line(12.5, 1716, 12.5, 1960, '#262626', 2) + line(1067.5, 1716, 1067.5, 1960, '#262626', 2) +
    line(12, 1960, 1068, 1960, '#262626', 2) +
    line(13, 1838, 1066, 1838, '#2c2c2c', 1.5, 'stroke-dasharray="5 3"');
  bars.forEach(function (v, i) {
    s += line(px(i), 1929.5, px(i), 1929.5 - v, v < 0 ? '#3c8f3a' : '#d8534b', 3);
  });
  s += poly(diff, '#e8e8e8', 3) + poly(dea, '#ee6c3c', 3);
  document.getElementById('macd').innerHTML = s;
}

drawKline();
drawVolume();
drawMacd();
```
